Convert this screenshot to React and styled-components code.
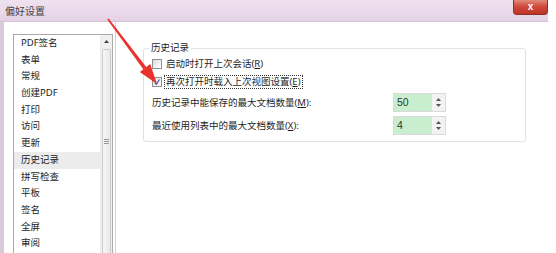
import React from 'react';
import styled, { createGlobalStyle } from 'styled-components';

const GlobalStyle = createGlobalStyle`
  html, body {
    margin: 0;
    padding: 0;
    background: #ffffff;
    overflow: hidden;
  }
  body {
    font-family: "Noto Sans", "Noto Sans CJK SC", sans-serif;
    color: #1f1f1f;
  }
`;

const Page = styled.div`
  position: relative;
  width: 556px;
  height: 253px;
  overflow: hidden;
  background: #fff;
`;

const Window = styled.div`
  width: 548px;
  height: 253px;
  display: flex;
  flex-direction: column;
`;

// title bar
const TitleBar = styled.div`
  height: 21px;
  flex: none;
  display: flex;
  align-items: center;
  justify-content: space-between;
  padding-left: 5px;
  background: linear-gradient(to bottom, #efe2ef 0%, #e9d8ea 60%, #e4d1e5 100%);
  border-bottom: 1px solid #d2c2d3;
`;

const Title = styled.span`
  font-size: 10px;
  line-height: 12px;
  color: #444;
`;

const CloseButton = styled.div`
  align-self: flex-start;
  width: 33px;
  height: 14px;
  display: flex;
  align-items: center;
  justify-content: center;
  background: linear-gradient(to bottom, #e08a7e 0%, #cf4b3c 45%, #bd3426 100%);
  border: 1px solid #8f2e25;
  border-top: none;
  border-radius: 0 0 4px 4px;
  color: #fff;
  font-size: 10px;
  font-weight: bold;
  line-height: 10px;
  font-family: "Liberation Sans", sans-serif;
`;

const Client = styled.div`
  flex: 1;
  display: flex;
  min-height: 0;
  border-left: 4px solid #d9cbd9;
`;

// left category list
const Sidebar = styled.div`
  width: 100px;
  flex: none;
  padding: 12px 2px 0 9px;
  border-right: 1px solid #c5dcc5;
`;

const ListBox = styled.div`
  height: 100%;
  display: flex;
  border: 1px solid #aaaaaa;
  border-bottom: none;
  box-sizing: border-box;
`;

const Items = styled.ul`
  flex: 1;
  margin: 0;
  padding: 0;
  list-style: none;
`;

const Item = styled.li`
  height: 16.7px;
  line-height: 16.7px;
  padding-left: 7px;
  font-size: 9.5px;
  color: #222;
  background: ${({ selected }) => (selected ? '#ececec' : 'transparent')};
  white-space: nowrap;
`;

const Scrollbar = styled.div`
  width: 11px;
  flex: none;
  display: flex;
  flex-direction: column;
  align-items: center;
  background: #f0f0f0;
  border-left: 1px solid #ececec;
`;

const ScrollArrow = styled.div`
  height: 13px;
  flex: none;
  display: flex;
  align-items: center;
  justify-content: center;
`;

const Thumb = styled.div`
  width: 9px;
  flex: 1;
  margin-top: 1px;
  display: flex;
  align-items: center;
  justify-content: center;
  padding-bottom: 20px;
  box-sizing: border-box;
  border: 1px solid #c9c9c9;
  border-bottom: none;
  border-radius: 2px 2px 0 0;
  background: linear-gradient(to right, #f7f7f7, #e9e9e9);
`;

const Grip = styled.div`
  width: 5px;
  height: 5px;
  background: repeating-linear-gradient(to bottom, #9a9a9a 0 1px, transparent 1px 2px);
`;

// right pane
const Content = styled.div`
  flex: 1;
  padding: 20px 0 0 27px;
`;

const Group = styled.fieldset`
  width: 383px;
  box-sizing: border-box;
  margin: 0;
  padding: 0 0 6px 8px;
  border: 1px solid #dde3e8;
  border-radius: 3px;
  min-width: 0;
`;

const Legend = styled.legend`
  padding: 0 2px;
  margin-left: -3px;
  font-size: 9.5px;
  line-height: 12px;
  color: #222;
`;

const CheckRow = styled.div`
  height: 18px;
  display: flex;
  align-items: center;
  margin-top: ${({ first }) => (first ? '1px' : '0')};
`;

const Box = styled.span`
  width: 10px;
  height: 10px;
  flex: none;
  box-sizing: border-box;
  border: 1px solid #8e8f8f;
  background: linear-gradient(135deg, #dcdcdc 0%, #f6f6f6 70%, #ffffff 100%);
  display: flex;
  align-items: center;
  justify-content: center;
`;

const Label = styled.span`
  margin-left: 2px;
  padding: 0 1px;
  font-size: 9.5px;
  line-height: 12px;
  white-space: nowrap;
  border: 1px ${({ focused }) => (focused ? 'dotted #333' : 'solid transparent')};
`;

const Key = styled.span`
  text-decoration: underline;
`;

const SpinRow = styled.div`
  display: grid;
  grid-template-columns: 241px 53px;
  align-items: center;
  height: 19px;
  margin-top: ${({ gap }) => gap}px;
`;

const SpinLabel = styled.span`
  font-size: 9.5px;
  line-height: 12px;
  white-space: nowrap;
`;

const Spin = styled.div`
  height: 19px;
  box-sizing: border-box;
  display: flex;
  border: 1px solid #dadada;
  background: #f3f3f3;
`;

const SpinField = styled.div`
  flex: 1;
  background: #c9eecf;
  padding-left: 3px;
  font-family: "Liberation Sans", "Noto Sans", sans-serif;
  font-size: 10.5px;
  line-height: 17px;
  color: #2a3a2a;
`;

const SpinArrows = styled.div`
  width: 13px;
  display: flex;
  flex-direction: column;
  align-items: center;
  justify-content: center;
  gap: 3px;
`;

const Overlay = styled.svg`
  position: absolute;
  left: 0;
  top: 0;
  pointer-events: none;
`;

const Tri = ({ up, color = '#555', w = 5, h = 3 }) => (
  <svg width={w} height={h} viewBox="0 0 5 3">
    <path d={up ? 'M0 3 L2.5 0 L5 3 Z' : 'M0 0 L2.5 3 L5 0 Z'} fill={color} />
  </svg>
);

const categories = [
  'PDF签名', '表单', '常规', '创建PDF', '打印', '访问', '更新',
  '历史记录', '拼写检查', '平板', '签名', '全屏', '审阅',
];

export default function App() {
  return (
    <Page>
      <GlobalStyle />
      <Window>
        <TitleBar>
          <Title>偏好设置</Title>
          <CloseButton>x</CloseButton>
        </TitleBar>
        <Client>
          <Sidebar>
            <ListBox>
              <Items>
                {categories.map((c) => (
                  <Item key={c} selected={c === '历史记录'}>{c}</Item>
                ))}
              </Items>
              <Scrollbar>
                <ScrollArrow><Tri up color="#444" /></ScrollArrow>
                <Thumb><Grip /></Thumb>
              </Scrollbar>
            </ListBox>
          </Sidebar>
          <Content>
            <Group>
              <Legend>历史记录</Legend>
              <CheckRow first>
                <Box />
                <Label>启动时打开上次会话(<Key>R</Key>)</Label>
              </CheckRow>
              <CheckRow>
                <Box>
                  <svg width="8" height="8" viewBox="0 0 8 8">
                    <path d="M1.8 4.6 L3.3 6.3 L6.5 1.5" stroke="#2b4fb8" strokeWidth="1.1" fill="none" />
                  </svg>
                </Box>
                <Label focused>再次打开时载入上次视图设置(<Key>E</Key>)</Label>
              </CheckRow>
              <SpinRow gap={2}>
                <SpinLabel>历史记录中能保存的最大文档数量(<Key>M</Key>):</SpinLabel>
                <Spin>
                  <SpinField>50</SpinField>
                  <SpinArrows><Tri up /><Tri /></SpinArrows>
                </Spin>
              </SpinRow>
              <SpinRow gap={4}>
                <SpinLabel>最近使用列表中的最大文档数量(<Key>X</Key>):</SpinLabel>
                <Spin>
                  <SpinField>4</SpinField>
                  <SpinArrows><Tri up /><Tri /></SpinArrows>
                </Spin>
              </SpinRow>
            </Group>
          </Content>
        </Client>
      </Window>
      {/* red annotation arrow */}
      <Overlay width="556" height="253" viewBox="0 0 556 253">
        <polygon points="107.3,19.6 108.7,18.4 146.6,67.4 143.3,69.3" fill="#e9322b" />
        <polygon points="157,84 139.8,71.9 150.2,64.1" fill="#e9322b" />
      </Overlay>
    </Page>
  );
}
